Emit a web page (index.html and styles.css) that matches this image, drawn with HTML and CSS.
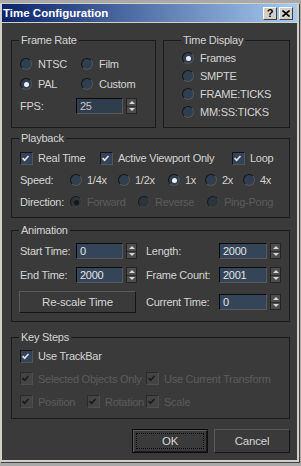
FILE: index.html
```html
<!DOCTYPE html>
<html lang="en">
<head>
  <meta charset="UTF-8">
  <title>Time Configuration</title>
  <link rel="stylesheet" href="styles.css">
</head>
<body>

  <div class="window">
    <div class="titlebar">
      <span class="title">Time Configuration</span>
      <div class="caption-btns">
        <button class="cap-btn help">?</button>
        <button class="cap-btn close">
          <svg width="8" height="7" viewBox="0 0 8 7"><path d="M0.5 0.5 L7.5 6.5 M7.5 0.5 L0.5 6.5" stroke="#000" stroke-width="1.6"/></svg>
        </button>
      </div>
    </div>

    <div class="client">

      <div class="top-groups">
        <div class="group frame-rate">
          <span class="group-title">Frame Rate</span>
          <div class="fr-grid">
            <label class="radio"><span class="dot"></span>NTSC</label>
            <label class="radio"><span class="dot"></span>Film</label>
            <label class="radio"><span class="dot on"></span>PAL</label>
            <label class="radio"><span class="dot"></span>Custom</label>
          </div>
          <div class="field fps">
            <span class="lbl">FPS:</span>
            <span class="input dim">25</span>
            <span class="spin"><i class="up"></i><i class="down"></i></span>
          </div>
        </div>

        <div class="group time-display">
          <span class="group-title">Time Display</span>
          <div class="td-list">
            <label class="radio"><span class="dot on"></span>Frames</label>
            <label class="radio"><span class="dot"></span>SMPTE</label>
            <label class="radio"><span class="dot"></span>FRAME:TICKS</label>
            <label class="radio"><span class="dot"></span>MM:SS:TICKS</label>
          </div>
        </div>
      </div>

      <div class="group playback">
        <span class="group-title">Playback</span>
        <div class="row pb-checks">
          <label class="check"><span class="box"><svg viewBox="0 0 13 13"><path d="M3 6 L5.5 8.5 L10 3.5"/></svg></span>Real Time</label>
          <label class="check"><span class="box"><svg viewBox="0 0 13 13"><path d="M3 6 L5.5 8.5 L10 3.5"/></svg></span>Active Viewport Only</label>
          <label class="check"><span class="box"><svg viewBox="0 0 13 13"><path d="M3 6 L5.5 8.5 L10 3.5"/></svg></span>Loop</label>
        </div>
        <div class="row speed">
          <span class="lbl">Speed:</span>
          <label class="radio"><span class="dot"></span>1/4x</label>
          <label class="radio"><span class="dot"></span>1/2x</label>
          <label class="radio"><span class="dot on"></span>1x</label>
          <label class="radio"><span class="dot"></span>2x</label>
          <label class="radio"><span class="dot"></span>4x</label>
        </div>
        <div class="row direction">
          <span class="lbl">Direction:</span>
          <label class="radio disabled"><span class="dot on"></span>Forward</label>
          <label class="radio disabled"><span class="dot"></span>Reverse</label>
          <label class="radio disabled"><span class="dot"></span>Ping-Pong</label>
        </div>
      </div>

      <div class="group animation">
        <span class="group-title">Animation</span>
        <div class="anim-grid">
          <div class="field">
            <span class="lbl">Start Time:</span>
            <span class="input">0</span>
            <span class="spin"><i class="up"></i><i class="down"></i></span>
          </div>
          <div class="field right">
            <span class="lbl">Length:</span>
            <span class="input">2000</span>
            <span class="spin"><i class="up"></i><i class="down"></i></span>
          </div>
          <div class="field">
            <span class="lbl">End Time:</span>
            <span class="input">2000</span>
            <span class="spin"><i class="up"></i><i class="down"></i></span>
          </div>
          <div class="field right">
            <span class="lbl">Frame Count:</span>
            <span class="input">2001</span>
            <span class="spin"><i class="up"></i><i class="down"></i></span>
          </div>
          <div class="field">
            <button class="btn rescale">Re-scale Time</button>
          </div>
          <div class="field right">
            <span class="lbl">Current Time:</span>
            <span class="input">0</span>
            <span class="spin"><i class="up"></i><i class="down"></i></span>
          </div>
        </div>
      </div>

      <div class="group key-steps">
        <span class="group-title">Key Steps</span>
        <div class="row ks-1">
          <label class="check"><span class="box"><svg viewBox="0 0 13 13"><path d="M3 6 L5.5 8.5 L10 3.5"/></svg></span>Use TrackBar</label>
        </div>
        <div class="row ks-2">
          <label class="check disabled"><span class="box"><svg viewBox="0 0 13 13"><path d="M3 6 L5.5 8.5 L10 3.5"/></svg></span>Selected Objects Only</label>
          <label class="check disabled"><span class="box"><svg viewBox="0 0 13 13"><path d="M3 6 L5.5 8.5 L10 3.5"/></svg></span>Use Current Transform</label>
        </div>
        <div class="row ks-3">
          <label class="check disabled"><span class="box"><svg viewBox="0 0 13 13"><path d="M3 6 L5.5 8.5 L10 3.5"/></svg></span>Position</label>
          <label class="check disabled"><span class="box"><svg viewBox="0 0 13 13"><path d="M3 6 L5.5 8.5 L10 3.5"/></svg></span>Rotation</label>
          <label class="check disabled"><span class="box"><svg viewBox="0 0 13 13"><path d="M3 6 L5.5 8.5 L10 3.5"/></svg></span>Scale</label>
        </div>
      </div>

      <div class="dialog-buttons">
        <button class="btn default"><span class="focus">OK</span></button>
        <button class="btn">Cancel</button>
      </div>

    </div>
  </div>

</body>
</html>
```

FILE: styles.css
```css
body {
  margin: 0;
  width: 301px;
  height: 466px;
  overflow: hidden;
  background: #a9a9a9;
  font-family: "Liberation Sans", Arial, sans-serif;
  font-size: 11px;
  letter-spacing: -0.25px;
  color: #d4d4d4;
}
.window {
  margin-top: 3px;
  width: 299px;
  border: 2px solid #d4d0c8;
  border-top-width: 1px;
  box-sizing: border-box;
  box-shadow: 1px 1px 0 #404040;
}
.titlebar {
  height: 18px;
  display: flex;
  align-items: center;
  justify-content: space-between;
  padding: 0 4px 0 1px;
  background: linear-gradient(to right, #0a246a, #a6caf0);
  border-bottom: 1px solid #d4d0c8;
}
.title {
  color: #fff;
  font-size: 11.5px;
  font-weight: bold;
  letter-spacing: 0;
}
.caption-btns {
  display: flex;
  gap: 2px;
}
.cap-btn {
  width: 14px;
  height: 13px;
  padding: 0;
  display: flex;
  align-items: center;
  justify-content: center;
  background: #d4d0c8;
  border: 1px solid;
  border-color: #fff #404040 #404040 #fff;
  font-family: "Liberation Sans", Arial, sans-serif;
  font-size: 11px;
  font-weight: bold;
  line-height: 11px;
  color: #000;
}

.client {
  height: 437px;
  box-sizing: border-box;
  padding: 17px 7px 0 9px;
  background: #3a3a3a;
}
.group {
  border: 1px solid #1a1a1a;
  padding: 0 0 0 8px;
  box-sizing: border-box;
}
.group-title {
  display: block;
  width: fit-content;
  height: 13px;
  line-height: 13px;
  margin: -7px 0 0 -1px;
  padding: 0 2px;
  background: #3a3a3a;
}
.top-groups {
  display: flex;
  gap: 7px;
}
.top-groups .group {
  height: 88px;
}
.frame-rate {
  width: 145px;
}
.time-display {
  width: 127px;
  padding-left: 18px;
}

/* radios and checks */
.radio, .check {
  display: flex;
  align-items: center;
  gap: 6px;
  white-space: nowrap;
}
.dot {
  width: 12px;
  height: 12px;
  box-sizing: border-box;
  border-radius: 50%;
  border: 1px solid;
  border-color: #141414 #555 #555 #141414;
  background: #2f3f51;
  display: flex;
  align-items: center;
  justify-content: center;
  flex-shrink: 0;
}
.dot.on::after {
  content: "";
  width: 5px;
  height: 5px;
  border-radius: 50%;
  background: #f0f0f0;
}
.radio.disabled {
  color: #5c5c5c;
}
.radio.disabled .dot {
  background: #2c343c;
  border-color: #1a1a1a #444 #444 #1a1a1a;
}
.radio.disabled .dot.on::after {
  background: #161616;
}
.box {
  width: 13px;
  height: 13px;
  box-sizing: border-box;
  border: 1px solid;
  border-color: #141414 #555 #555 #141414;
  background: #33445a;
  flex-shrink: 0;
}
.box svg {
  display: block;
  width: 11px;
  height: 11px;
  margin: 0 0 0 -1px;
}
.box path {
  fill: none;
  stroke: #dedede;
  stroke-width: 2;
}
.check {
  gap: 5px;
}
.check.disabled {
  color: #5c5c5c;
}
.check.disabled .box {
  background: #444;
  border-color: #2a2a2a #4e4e4e #4e4e4e #2a2a2a;
}
.check.disabled .box path {
  stroke: #1c1c1c;
}

.fr-grid {
  display: grid;
  grid-template-columns: 61px auto;
  grid-auto-rows: 20px;
  margin-top: 7px;
}
.td-list {
  display: grid;
  grid-auto-rows: 18px;
  margin-top: 2px;
}

/* spinner fields */
.field {
  display: flex;
  align-items: center;
  height: 20px;
}
.field .lbl {
  width: 56px;
}
.fps {
  margin-top: 2px;
}
.input {
  width: 47px;
  height: 16px;
  box-sizing: border-box;
  padding-left: 3px;
  line-height: 14px;
  border: 1px solid;
  border-color: #0a0a0a #5a5a5a #5a5a5a #0a0a0a;
  background: #34455a;
  color: #e2e2e2;
}
.input.dim {
  background: #2f3d4c;
  color: #c8c8c8;
}
.spin {
  width: 11px;
  height: 16px;
  margin-left: 3px;
  box-sizing: border-box;
  border: 1px solid #232323;
  background: #4d4d4d;
  display: flex;
  flex-direction: column;
}
.spin i {
  flex: 1;
  display: flex;
  align-items: center;
  justify-content: center;
}
.spin i + i {
  border-top: 1px solid #2a2a2a;
}
.spin i::before {
  content: "";
  border-left: 3px solid transparent;
  border-right: 3px solid transparent;
}
.spin .up::before {
  border-bottom: 3px solid #d6d6d6;
}
.spin .down::before {
  border-top: 3px solid #d6d6d6;
}

/* playback */
.playback {
  margin-top: 10px;
  height: 80px;
}
.row {
  display: grid;
  align-items: center;
}
.playback .row {
  height: 22px;
}
.pb-checks {
  margin-top: 2px;
  grid-template-columns: 80px 132px auto;
}
.speed {
  grid-template-columns: 50px 48px 50px 37px 38px auto;
}
.direction {
  grid-template-columns: 50px 68px 69px auto;
}
.speed .radio, .direction .radio {
  gap: 5px;
}

/* animation */
.animation {
  margin-top: 12px;
  height: 92px;
}
.anim-grid {
  display: grid;
  grid-template-columns: 126px auto;
  grid-template-rows: 20px 20px 22px;
  row-gap: 4px;
  margin-top: 4px;
}
.anim-grid .field:nth-child(5), .anim-grid .field:nth-child(6) {
  height: 22px;
  margin-top: 2px;
}
.field.right .lbl {
  width: 73px;
}
.field.right .input {
  width: 48px;
}
.btn {
  font-family: "Liberation Sans", Arial, sans-serif;
  font-size: 11.5px;
  letter-spacing: -0.2px;
  color: #d4d4d4;
  background: #3a3a3a;
  border: 1px solid;
  border-color: #5a5a5a #141414 #141414 #5a5a5a;
  padding: 0;
}
.rescale {
  width: 117px;
  height: 22px;
  margin-left: -1px;
}

/* key steps */
.key-steps {
  margin-top: 15px;
  height: 82px;
}
.key-steps .row {
  height: 23px;
}
.key-steps .ks-1 {
  margin-top: 1px;
  height: 22px;
}
.ks-2 {
  grid-template-columns: 126px auto;
}
.ks-3 {
  grid-template-columns: 67px 59px auto;
}

.dialog-buttons {
  margin-top: 10px;
  display: flex;
  justify-content: flex-end;
  gap: 6px;
}
.dialog-buttons .btn {
  width: 76px;
  height: 24px;
}
.btn.default {
  border: 1px solid #0c0c0c;
  box-shadow: inset 1px 1px 0 #5a5a5a, inset -1px -1px 0 #1c1c1c;
  display: flex;
  align-items: center;
  justify-content: center;
  padding: 3px;
}
.focus {
  display: flex;
  align-items: center;
  justify-content: center;
  width: 100%;
  height: 100%;
  box-sizing: border-box;
  border: 1px dotted #000;
}
```
